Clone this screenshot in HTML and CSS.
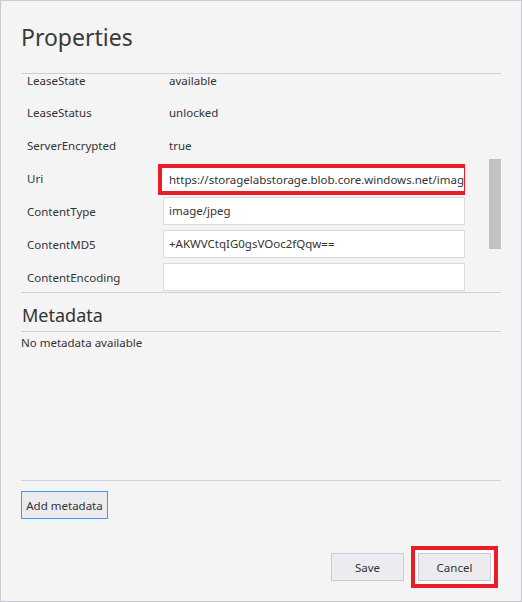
FILE: index.html
```html
<!DOCTYPE html>
<html lang="en">
<head>
<meta charset="utf-8">
<title>Properties</title>
<link rel="stylesheet" href="styles.css">
</head>
<body>
<div class="dialog">
  <h1 class="title">Properties</h1>
  <div class="props">
    <div class="props-scroll">
      <div class="props-list">
        <div class="row row-first"><span class="label">LeaseState</span><span class="value">available</span></div>
        <div class="row"><span class="label">LeaseStatus</span><span class="value">unlocked</span></div>
        <div class="row"><span class="label">ServerEncrypted</span><span class="value">true</span></div>
        <div class="row"><span class="label">Uri</span><div class="field field-highlight">https://storagelabstorage.blob.core.windows.net/images/photo.jpg</div></div>
        <div class="row"><span class="label">ContentType</span><div class="field">image/jpeg</div></div>
        <div class="row"><span class="label">ContentMD5</span><div class="field">+AKWVCtqIG0gsVOoc2fQqw==</div></div>
        <div class="row row-last"><span class="label">ContentEncoding</span><div class="field"></div></div>
      </div>
    </div>
    <div class="scrollbar"><div class="thumb"></div></div>
  </div>
  <h2 class="section-title">Metadata</h2>
  <div class="meta-body">
    <p class="empty">No metadata available</p>
  </div>
  <div class="meta-actions">
    <button class="btn btn-focus" type="button">Add metadata</button>
  </div>
  <div class="footer">
    <button class="btn btn-footer" type="button">Save</button>
    <span class="highlight"><button class="btn btn-footer" type="button">Cancel</button></span>
  </div>
</div>
</body>
</html>
```

FILE: styles.css
```css
html, body {
  margin: 0;
  padding: 0;
  background: #f4f4f4;
}

body {
  font-family: "Noto Sans", "Open Sans", sans-serif;
  color: #333;
}

.dialog {
  box-sizing: border-box;
  width: 522px;
  height: 602px;
  border: 1px solid #c9c9d6;
  background: #f4f4f4;
  padding: 0 20px 13px 20px;
  display: flex;
  flex-direction: column;
}

.title {
  margin: 0;
  padding: 20px 0 20px 0;
  font-size: 23px;
  line-height: 32px;
  font-weight: 400;
  color: #3a3a3a;
}

.props {
  height: 218px;
  border-top: 1px solid #cfcfdc;
  border-bottom: 1px solid #cfcfdc;
  display: flex;
  justify-content: space-between;
  flex-shrink: 0;
}

.props-scroll {
  width: 444px;
  overflow: hidden;
}

.row {
  display: grid;
  grid-template-columns: 142px 302px;
  height: 33px;
  font-size: 11.5px;
}

.row-first {
  height: 23px;
}

.row-first .label,
.row-first .value {
  padding-top: 0;
  line-height: 14px;
}

.row-last {
  height: 28px;
}

.label,
.value {
  padding: 2px 0 0 6px;
  line-height: 28px;
  white-space: nowrap;
}

.field {
  box-sizing: border-box;
  margin-top: 1px;
  height: 28px;
  background: #fff;
  border: 1px solid #dadae3;
  padding: 0 5px;
  line-height: 26px;
  white-space: nowrap;
  overflow: hidden;
}

.field-highlight {
  margin-left: -5px;
  width: 310px;
  height: 31px;
  border: 4px solid #ed1c24;
  padding: 0 0 0 7px;
  line-height: 23px;
}

.scrollbar {
  width: 12px;
}

.thumb {
  margin-top: 85px;
  height: 90px;
  background: #c2c2c6;
}

.section-title {
  margin: 0;
  padding: 9px 0 3px 1px;
  font-size: 18px;
  line-height: 26px;
  font-weight: 400;
  color: #333;
  border-bottom: 1px solid #cfcfdc;
}

.meta-body {
  flex: 1;
}

.empty {
  margin: 0;
  padding-top: 3px;
  font-size: 11.5px;
  line-height: 16px;
}

.meta-actions {
  border-top: 1px solid #cfcfdc;
  padding-top: 10px;
  display: flex;
}

.btn {
  font-family: "Noto Sans", "Open Sans", sans-serif;
  font-size: 11.5px;
  color: #333;
  background: #ececf0;
  border: 1px solid #cacad6;
  height: 28px;
  padding: 0 4px;
  margin: 0;
  white-space: nowrap;
  cursor: pointer;
}

.btn-focus {
  width: 87px;
  border-color: #3d9af5;
}

.footer {
  margin-top: 27px;
  margin-right: 3px;
  display: flex;
  justify-content: flex-end;
  align-items: center;
  gap: 7px;
}

.btn-footer {
  width: 73px;
}

.highlight {
  display: flex;
  border: 4px solid #ed1c24;
  padding: 3px;
  background: #fff;
}
```
